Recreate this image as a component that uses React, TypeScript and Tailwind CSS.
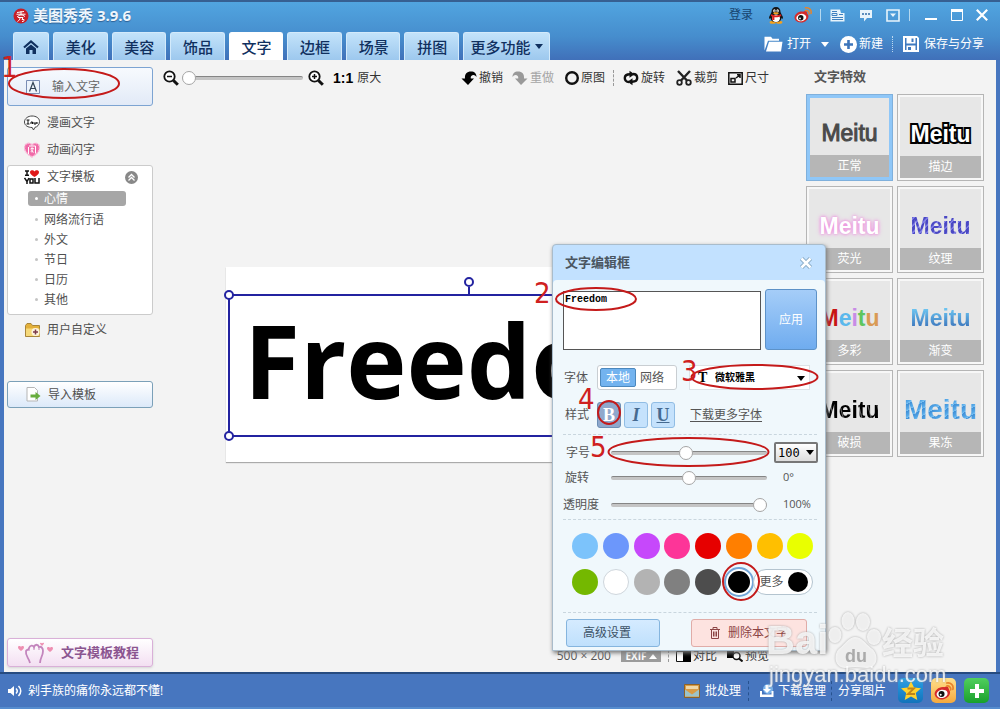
import React, { useState } from 'react';

const tabs = ['美化', '美容', '饰品', '文字', '边框', '场景', '拼图'];
const moods = ['心情', '网络流行语', '外文', '节日', '日历', '其他'];

const effects = [
  { name: '正常', style: 'text-[#4a4a4a] [-webkit-text-stroke:1px_#4a4a4a]' },
  { name: '描边', style: 'text-white font-bold [-webkit-text-stroke:4px_#000] [paint-order:stroke_fill]' },
  { name: '荧光', style: 'text-white font-bold [text-shadow:0_0_3px_#ee82dc,0_0_5px_#ee9be2]' },
  {
    name: '纹理',
    style:
      'font-bold text-transparent bg-clip-text bg-[repeating-linear-gradient(135deg,#4a48c4_0px,#4a48c4_3px,#7d7be6_4px,#7d7be6_5px)]',
  },
  { name: '多彩', style: 'font-bold' },
  { name: '渐变', style: 'font-bold text-transparent bg-clip-text bg-linear-to-b from-[#6cc4f0] from-25% to-[#3a70b8] to-80%' },
  {
    name: '破损',
    style:
      'font-bold text-transparent bg-clip-text bg-[repeating-linear-gradient(75deg,#000_0px,#000_7px,#666_8px,#111_9px)]',
  },
  {
    name: '果冻',
    style:
      'font-bold text-[28px] text-transparent bg-clip-text bg-[repeating-linear-gradient(150deg,#3f8fd6_0px,#55a8e8_4px,#7cc2f2_6px)]',
  },
];

const colors = [
  ['浅蓝', 'bg-[#7cc3fb]'],
  ['蓝色', 'bg-[#6c97fb]'],
  ['紫色', 'bg-[#c648fb]'],
  ['粉色', 'bg-[#fd3598]'],
  ['红色', 'bg-[#e60000]'],
  ['橙色', 'bg-[#ff7f00]'],
  ['金色', 'bg-[#ffbf00]'],
  ['黄色', 'bg-[#e9ff00]'],
  ['绿色', 'bg-[#74b800]'],
  ['白色', 'bg-white border border-[#cfd6dc]'],
  ['浅灰', 'bg-[#b3b3b3]'],
  ['灰色', 'bg-[#808080]'],
  ['深灰', 'bg-[#4d4d4d]'],
  ['黑色', 'bg-black'],
];

function Caret({ className = '' }: { className?: string }) {
  return (
    <svg viewBox="0 0 8 5" className={`h-[5px] w-2 ${className}`} fill="currentColor">
      <path d="M0 0h8L4 5z" />
    </svg>
  );
}

function Weibo({ className = '' }: { className?: string }) {
  return (
    <svg viewBox="0 0 18 18" className={className}>
      <ellipse cx="7.5" cy="11" rx="7" ry="5.5" fill="#d52b2b" transform="rotate(-12 7.5 11)" />
      <path d="M9 6c2-2 5-1 4 2z" fill="#d52b2b" />
      <ellipse cx="7.3" cy="11.6" rx="5" ry="3.7" fill="#fff" transform="rotate(-10 7.3 11.6)" />
      <circle cx="6.8" cy="11.8" r="2.7" fill="#111" />
      <circle cx="6" cy="12.4" r="0.9" fill="#fff" />
      <path d="M11.5 4.5c2-.5 4 1.5 3.5 3.5M11.5 1.8c3.5-.8 6.5 2.2 5.5 5.7" fill="none" stroke="#e8832a" strokeWidth="1.5" strokeLinecap="round" />
    </svg>
  );
}

function Penguin() {
  return (
    <svg viewBox="0 0 16 17" className="h-[17px] w-4">
      <ellipse cx="4.8" cy="15.3" rx="3.2" ry="1.5" fill="#f5a11c" />
      <ellipse cx="11.2" cy="15.3" rx="3.2" ry="1.5" fill="#f5a11c" />
      <path d="M8 0c3 0 4.500 2 4.500 5 0 1 2.500 4 2.500 6 0 1-1 1-1.500 0-.5 3-2.500 4.300-5.500 4.300S3 14 2.500 11C2 12 1 12 1 11c0-2 2.500-5 2.500-6 0-3 1.500-5 4.500-5z" fill="#151515" />
      <ellipse cx="8" cy="11.3" rx="3.9" ry="3.7" fill="#fff" />
      <ellipse cx="6.4" cy="3.8" rx="1.2" ry="1.6" fill="#fff" />
      <ellipse cx="9.6" cy="3.8" rx="1.2" ry="1.6" fill="#fff" />
      <circle cx="6.7" cy="4" r=".6" />
      <circle cx="9.3" cy="4" r=".6" />
      <ellipse cx="8" cy="6.2" rx="2.8" ry="1" fill="#f5a11c" />
      <path d="M3.2 7.3c3 1.5 6.6 1.5 9.6 0l.6 1.7c-2.5 1.2-5 1.5-7 1.2V13H4.2V9.6l-1.4-.7z" fill="#dd1f1f" />
    </svg>
  );
}

function Magnifier({ plus }: { plus?: boolean }) {
  return (
    <svg viewBox="0 0 16 16" className="size-4" fill="none" stroke="#111">
      <circle cx="6.5" cy="6.5" r="5.2" strokeWidth="1.8" fill="#fff" />
      <path d="M10.5 10.5l4.3 4.3" strokeWidth="3" />
      <path d={plus ? 'M4 6.5h5M6.5 4v5' : 'M4 6.5h5'} strokeWidth="1.5" />
    </svg>
  );
}

function UndoArrow({ flip, className = '' }: { flip?: boolean; className?: string }) {
  return (
    <svg viewBox="0 0 16 16" className={`size-4 ${flip ? '-scale-x-100' : ''} ${className}`} fill="currentColor">
      <path d="M.5 8.500H4C3.500 4 6 1.500 10 1.500c3.500 0 5.500 2 5.500 5.500-1-1.500-2.500-2.300-4-1.800-1.500.4-2 1.800-1.700 3.300H13L7 15z" />
    </svg>
  );
}

function ToolButton({ icon, label, className = '' }: { icon: React.ReactNode; label: string; className?: string }) {
  return (
    <button className={`flex items-center gap-[2px] text-xs whitespace-nowrap ${className}`}>
      {icon}
      {label}
    </button>
  );
}

function Slider({ label, value }: { label: string; value: number }) {
  const [v, setV] = useState(value);
  return (
    <input
      type="range"
      aria-label={label}
      value={v}
      onChange={(e) => setV(Number(e.target.value))}
      className="h-4 min-w-0 flex-1 appearance-none bg-transparent [&::-webkit-slider-runnable-track]:h-1 [&::-webkit-slider-runnable-track]:rounded-full [&::-webkit-slider-runnable-track]:border-t [&::-webkit-slider-runnable-track]:border-[#858585] [&::-webkit-slider-runnable-track]:bg-[#c4c4c4] [&::-webkit-slider-thumb]:-mt-[6px] [&::-webkit-slider-thumb]:size-[14px] [&::-webkit-slider-thumb]:appearance-none [&::-webkit-slider-thumb]:rounded-full [&::-webkit-slider-thumb]:border [&::-webkit-slider-thumb]:border-[#a5a5a5] [&::-webkit-slider-thumb]:bg-white"
    />
  );
}

function Header() {
  return (
    <header className="flex h-[60px] shrink-0 justify-between border-t-2 border-t-[#366092] bg-linear-to-b from-[#51a5e0] via-[#468dcd] via-60% to-[#4070b9]">
      <div className="flex flex-col justify-between pl-[13px]">
        <div className="flex h-[27px] items-center gap-1">
          <svg viewBox="0 0 16 16" className="size-4">
            <circle cx="8" cy="8" r="7.5" fill="#c81e28" />
            <path d="M4 4.5l7-1M8 3v5M3.5 6.2h9M7.5 6.5L4 9M8.5 6.5L12 8.5M5 9.5h5l-1 2h2c0 2-.5 2-2 2M7 9.5c0 2-1 3-2.5 4" stroke="#fff" fill="none" />
          </svg>
          <h1 className="text-[15px] font-bold text-[#eef6fc] [text-shadow:0_1px_1px_#2c5f94]">美图秀秀 3.9.6</h1>
        </div>
        <nav className="flex gap-1 text-[15px] leading-7 font-medium text-[#10305f]">
          <button
            aria-label="首页"
            className="flex h-7 w-9 items-center justify-center rounded-t-[3px] border border-b-0 border-[#d3eafb] bg-linear-to-b from-[#c3e3fa] to-[#9dc8ee]"
          >
            <svg viewBox="0 0 16 14" className="h-[14px] w-4">
              <path d="M1 7.5L8 1.5l7 6" fill="none" stroke="currentColor" strokeWidth="2.2" />
              <path d="M3 8.5l5-4 5 4V14H9.500v-4h-3v4H3z" fill="currentColor" />
            </svg>
          </button>
          <div className="flex w-[406px] gap-1">
            {tabs.map((tab) => (
              <button
                key={tab}
                className={`h-7 flex-1 rounded-t-[3px] border border-b-0 pl-px ${
                  tab === '文字' ? 'border-white bg-white' : 'border-[#d3eafb] bg-linear-to-b from-[#c3e3fa] to-[#9dc8ee]'
                }`}
              >
                {tab}
              </button>
            ))}
          </div>
          <button className="flex h-7 w-[87px] items-center justify-center gap-1 rounded-t-[3px] border border-b-0 border-[#d3eafb] bg-linear-to-b from-[#c3e3fa] to-[#9dc8ee]">
            更多功能
            <Caret />
          </button>
        </nav>
      </div>

      <div className="flex flex-col pr-3 text-xs text-white">
        <div className="flex h-[26px] items-center justify-end">
          <a href="#login" className="text-[#17446f]">登录</a>
          <button aria-label="QQ" className="ml-[15px]"><Penguin /></button>
          <button aria-label="微博" className="ml-[10px]"><Weibo className="size-[18px]" /></button>
          <i className="ml-[8px] h-3 w-px bg-[#b5d9f0]" />
          <button aria-label="资讯" className="ml-[9px]">
            <svg viewBox="0 0 15 13" className="h-[13px] w-[15px]">
              <path d="M.5.5h9.500l1 3.500h3.500v8.500H.5z" fill="#e8f4fb" />
              <path d="M2 2.500h5M2 4.500h5v2H2zM9 5.500h4M2 8.500h11M2 10.500h11" fill="none" stroke="#3f80bf" />
            </svg>
          </button>
          <button aria-label="反馈" className="ml-[14px]">
            <svg viewBox="0 0 14 13" className="h-[13px] w-[14px]">
              <path d="M1 1h12v8H8l-3 3.500V9H1z" fill="#e8f4fb" />
              <path d="M3 5h2M6 5h2M9 5h2" stroke="#2f6ca9" strokeWidth="1.5" />
            </svg>
          </button>
          <button aria-label="菜单" className="ml-[13px]">
            <svg viewBox="0 0 14 13" className="h-[13px] w-[14px]">
              <path d="M1 1h12v11H1z" fill="none" stroke="#e8f4fb" strokeWidth="1.6" />
              <path d="M4 4.5h6L7 8z" fill="#e8f4fb" />
            </svg>
          </button>
          <i className="ml-[9px] h-3 w-px bg-[#b5d9f0]" />
          <button aria-label="最小化" className="ml-[15px]">
            <svg viewBox="0 0 12 12" className="size-3"><path d="M0 10h12" stroke="#fff" strokeWidth="2" /></svg>
          </button>
          <button aria-label="最大化" className="ml-[14px]">
            <svg viewBox="0 0 12 12" className="size-3" fill="none" stroke="#fff"><path d="M.5.5h11v11H.5z" /><path d="M0 1.500h12" strokeWidth="3" /></svg>
          </button>
          <button aria-label="关闭" className="ml-[13px]">
            <svg viewBox="0 0 12 12" className="size-3"><path d="M.8.8l10.400 10.400M11.200.8L.8 11.200" stroke="#fff" strokeWidth="2.2" /></svg>
          </button>
        </div>
        <div className="flex h-8 items-center justify-end pr-1">
          <button className="flex items-center gap-1">
            <svg viewBox="0 0 19 16" className="h-4 w-[19px]" fill="#fff">
              <path d="M.5 14.500V.8h6.500l1.500 2H15v2H4z" />
              <path d="M5 5.800h13.500L17 15.500H2z" />
            </svg>
            打开
          </button>
          <button aria-label="最近打开" className="ml-[10px]"><Caret /></button>
          <button className="ml-[11px] flex items-center gap-[2px]">
            <svg viewBox="0 0 17 17" className="size-[17px]">
              <circle cx="8.5" cy="8.5" r="8.5" fill="#fff" />
              <path d="M8.5 4v9M4 8.5h9" stroke="#3c75bb" strokeWidth="2.6" />
            </svg>
            新建
          </button>
          <i className="ml-[9px] h-4 border-l border-dotted border-[#bcd8f0]" />
          <button className="ml-[10px] flex items-center gap-[5px]">
            <svg viewBox="0 0 16 16" className="size-4">
              <path d="M0 0h14l2 2v14H0z" fill="#fff" />
              <path d="M2 2h1.500v5.500h9V2H14v12h-1.500V9.500h-9V14H2z" fill="#3f7abf" />
              <path d="M8.500 2.500h2V6h-2zM5 11h3v3H5z" fill="#3f7abf" />
            </svg>
            保存与分享
          </button>
        </div>
      </div>
    </header>
  );
}

function Sidebar() {
  return (
    <aside className="flex w-[156px] shrink-0 flex-col pt-[7px] pr-[7px] pb-[5px] pl-[3px] text-xs text-[#505050]">
      <button className="flex h-[39px] items-center gap-3 rounded-[3px] border border-[#7da4d2] bg-linear-to-b from-[#f7fafe] to-[#e2eaf7] pl-[18px] text-[#666]">
        <svg viewBox="0 0 14 14" className="size-[14px]">
          <path d="M.5.5h13v13H.5z" fill="#edf3fb" stroke="#7a8db5" />
          <path d="M3.5 11.5L7 2.5l3.5 9M4.8 8.5h4.4" fill="none" stroke="#345" strokeWidth="1.2" />
        </svg>
        输入文字
      </button>
      <button className="mt-[3px] flex h-[27px] items-center gap-[7px] pl-[17px]">
        <svg viewBox="0 0 16 16" className="size-4">
          <path d="M8 1c4 0 7.5 2 7.5 5.5S13 12 11 12.3L9.5 15l-1.3-2.5C4 12.5.5 10.5.5 7S4 1 8 1z" fill="#fff" stroke="#444" />
          <path d="M2.5 5h3M4 5v4M2.5 9h3M7 9V7h1.500v2M10 7v2h2V7M13 7v2" fill="none" stroke="#111" />
        </svg>
        漫画文字
      </button>
      <button className="flex h-[27px] items-center gap-[7px] pl-[17px]">
        <svg viewBox="0 0 16 16" className="size-4">
          <path d="M8 15C3 12 .5 9 .5 5.5.5 1 6 0 8 3c2-3 7.5-2 7.5 2.5C15.5 9 13 12 8 15z" fill="#f06aa8" stroke="#f9b6d5" strokeWidth="1.5" strokeDasharray="2 1" />
          <path d="M4.5 5v7M5 4h6.500v7.500M8 5.500v5M6.500 7l1.500-1 2 1M7 9.500l1-1 1.500 2" fill="none" stroke="#fff" />
        </svg>
        动画闪字
      </button>
      <section className="mt-[2px] rounded-[3px] border border-[#cbcbcb] bg-white py-px">
        <button className="flex h-5 w-full items-center gap-[7px] pl-4">
          <svg viewBox="0 0 16 14" className="h-[14px] w-4" fill="none" stroke="#111" strokeWidth="1.5">
            <path d="M1 1h4M3 1v4M1 5.3h4" />
            <path d="M10.5 7C7.500 5 6 3.800 6 2.200 6 0 9.500-.3 10.500 1.500 11.500-.3 15 0 15 2.200c0 1.600-1.500 2.800-4.500 4.800z" fill="#e01818" stroke="none" />
            <path d="M.5 8L3 11.500 5 8M3 11v3M6 9h3v4H6zM11 8v5h4V8" />
          </svg>
          文字模板
          <svg viewBox="0 0 13 13" className="mr-[14px] ml-auto size-[13px]">
            <circle cx="6.5" cy="6.5" r="6.5" fill="#888" />
            <path d="M3.5 6.5l3-3 3 3M3.5 9.5l3-3 3 3" fill="none" stroke="#fff" strokeWidth="1.3" />
          </svg>
        </button>
        <ul className="mt-[3px] flex flex-col gap-[5px] pt-px pb-[6px] pl-5">
          {moods.map((mood, i) => (
            <li key={mood} className="flex h-[15px] items-center first:mb-px">
              <button
                className={`flex h-[15px] w-[98px] items-center gap-[6px] rounded-[3px] pl-[7px] ${i === 0 ? 'bg-[#a6a6a6] text-white' : ''}`}
              >
                <span className={`size-[3px] rounded-full ${i === 0 ? 'bg-white' : 'bg-[#c4c4c4]'}`} />
                {mood}
              </button>
            </li>
          ))}
        </ul>
      </section>
      <button className="mt-1 flex h-[22px] items-center gap-[6px] pl-[18px]">
        <svg viewBox="0 0 16 14" className="h-[14px] w-4">
          <path d="M.5 2.5L2 .5h4l1.500 2h7v11H.5z" fill="#e3b03a" stroke="#a8853a" />
          <path d="M1 5.500h13.500v7.500H1z" fill="#f6d979" />
          <circle cx="10.5" cy="9" r="4" fill="#fdf3dc" />
          <path d="M10.5 6.5v5M8 9h5" stroke="#7b3a4a" strokeWidth="1.5" />
        </svg>
        用户自定义
      </button>
      <button className="mt-[40px] flex h-[27px] items-center gap-[7px] rounded-[3px] border border-[#7ba0b8] bg-linear-to-b from-white to-[#dce9f9] pl-[18px]">
        <svg viewBox="0 0 15 15" className="size-[15px]">
          <path d="M1 .5h7.500l3 3V14H1z" fill="#fff" stroke="#b5b5b5" />
          <path d="M4.500 7.500h5V5l5 4-5 4v-2.500h-5z" fill="#68ad3e" />
        </svg>
        导入模板
      </button>
      <button className="mt-auto flex h-[29px] items-center gap-[7px] rounded-[3px] border border-[#d9b0d8] bg-linear-to-b from-white to-[#f3dff2] pl-[10px] text-[13px] font-bold text-[#8b5590] shadow-sm">
        <svg viewBox="0 0 36 22" className="h-[22px] w-9">
          <path d="M12 21c-1-5-5-7-4-12 1-2 3-1 3-3 1-3 4-3 5-1 1-3 4-3 5 0 2-1 4 1 4 4 0 5-3 7-3 12" fill="none" stroke="#c385bd" strokeWidth="1.8" />
          <path d="M11 6v3M16 5v3M21 5v3" stroke="#c385bd" />
          <path d="M3 9C1 7.500 0 6.500 0 5.300 0 3.500 2.500 3.500 3 5c.5-1.500 3-1.500 3 .3C6 6.500 5 7.500 3 9zM32 10c-2-1.500-3-2.500-3-3.700C29 4.500 31.500 4.500 32 6c.5-1.500 3-1.500 3 .3 0 1.200-1 2.200-3 3.700zM24 4l-2-2.200C22 .5 23.500.5 24 1.500c.5-1 2-1 2 .3z" fill="#ee8fb1" />
        </svg>
        文字模板教程
      </button>
    </aside>
  );
}

function Workspace() {
  return (
    <main className="flex min-w-0 flex-1 flex-col text-xs text-[#333]">
      <div className="flex h-9 items-center justify-between pr-[33px] pl-[3px]">
        <div className="flex items-center">
          <button aria-label="缩小"><Magnifier /></button>
          <div className="ml-[3px] flex w-[121px]"><Slider label="缩放" value={0} /></div>
          <button aria-label="放大" className="ml-[5px]"><Magnifier plus /></button>
          <button className="ml-[9px] flex items-center gap-1 whitespace-nowrap">
            <b className="font-['Liberation_Sans',sans-serif] text-sm text-black">1:1</b>
            原大
          </button>
        </div>
        <div className="flex items-center">
          <ToolButton label="撤销" icon={<UndoArrow className="text-black" />} />
          <ToolButton label="重做" className="ml-[9px] text-[#a5a5a5]" icon={<UndoArrow flip className="text-[#999]" />} />
          <ToolButton
            label="原图"
            className="ml-[11px]"
            icon={<svg viewBox="0 0 14 14" className="size-[14px]"><circle cx="7" cy="7" r="5.8" fill="none" stroke="#111" strokeWidth="2.4" /></svg>}
          />
          <i className="ml-[8px] h-4 border-l border-dashed border-[#999]" />
          <ToolButton
            label="旋转"
            className="ml-[9px]"
            icon={
              <svg viewBox="0 0 16 16" className="size-4" fill="none" stroke="#111" strokeWidth="2.4">
                <path d="M6 12C3 12 1.800 10 1.800 8S3.500 4.300 7 4.300M10 4c3 0 4.200 2 4.200 4s-1.700 3.700-5.200 3.700" />
                <path d="M6.500.8l5 3.500-5 3.500zM9.500 8.200l-5 3.500 5 3.500z" fill="#111" stroke="none" />
              </svg>
            }
          />
          <ToolButton
            label="裁剪"
            className="ml-[11px]"
            icon={
              <svg viewBox="0 0 16 16" className="size-4" fill="none" stroke="#222" strokeWidth="1.8">
                <path d="M2 1l9 9.5M14 1l-9 9.5" strokeWidth="2.4" />
                <circle cx="3.5" cy="12.5" r="2.3" />
                <circle cx="12.5" cy="12.5" r="2.3" />
              </svg>
            }
          />
          <ToolButton
            label="尺寸"
            className="ml-[10px]"
            icon={
              <svg viewBox="0 0 15 13" className="h-[13px] w-[15px]" fill="none" stroke="#111" strokeWidth="1.5">
                <path d="M.8.8h13.400v11.400H.8z" />
                <path d="M3 6.500h4v3.500H3zM8 6l4-3M9 2.800h3V6" />
              </svg>
            }
          />
        </div>
      </div>

      <div className="flex flex-1 items-center justify-center pr-[22px] pb-2">
        <div className="flex h-[195px] w-[488px] bg-white pt-[27px] pr-1 pb-[25px] pl-[2px] shadow-[0_1px_1px_#aaa]">
          <div className="relative flex min-w-0 flex-1 items-center border-2 border-[#2323a0] pl-[14px]">
            <span className="pb-[10px] font-['Open_Sans',sans-serif] text-[102px] leading-none font-bold text-black">Freedom</span>
            <i className="absolute -top-[6px] -left-[6px] size-[10px] rounded-full border-2 border-[#2323a0] bg-white" />
            <i className="absolute -bottom-[6px] -left-[6px] size-[10px] rounded-full border-2 border-[#2323a0] bg-white" />
            <i className="absolute -top-[19px] left-1/2 size-[10px] -translate-x-1/2 rounded-full border-2 border-[#2323a0] bg-white" />
            <i className="absolute -top-[9px] left-1/2 h-2 w-[2px] -translate-x-1/2 bg-[#2323a0]" />
          </div>
        </div>
      </div>

      <div className="flex h-8 items-center justify-end pr-[33px]">
        <span className="text-[#555]">500 × 200</span>
        <button className="ml-[10px] flex h-[11px] w-10 items-center justify-center gap-[2px] bg-[#9b9b9b] text-[10px] leading-none font-bold text-white">
          EXIF
          <Caret className="rotate-180" />
        </button>
        <i className="ml-[7px] h-3 border-l border-dashed border-[#999]" />
        <ToolButton
          label="对比"
          className="ml-[7px]"
          icon={<svg viewBox="0 0 15 11" className="h-[11px] w-[15px]"><path d="M.5.5h14v10H.5z" fill="#fff" stroke="#111" /><path d="M7 0h8v11H7z" /></svg>}
        />
        <ToolButton
          label="预览"
          className="ml-[10px]"
          icon={
            <svg viewBox="0 0 16 12" className="h-3 w-4">
              <path d="M0 0h7v8H0z" />
              <circle cx="9.5" cy="6" r="3.5" fill="#fff" stroke="#111" strokeWidth="1.4" />
              <path d="M12 8.5l3.5 3" stroke="#111" strokeWidth="2" />
            </svg>
          }
        />
      </div>
    </main>
  );
}

function EffectsPanel() {
  return (
    <aside className="w-[194px] shrink-0 pl-1 text-xs">
      <h2 className="flex h-[34px] items-center pl-2 text-[13px] font-bold text-[#555]">文字特效</h2>
      <div className="grid w-[178px] grid-cols-2 gap-x-1 gap-y-[5px]">
        {effects.map((fx, i) => (
          <button
            key={fx.name}
            className={`flex h-[87px] flex-col bg-[#e7e7e7] outline-1 -outline-offset-1 ${
              i === 0 ? 'border-4 border-[#8fc7f8] outline-[#7fb0dc]' : 'border-[3px] border-[#f7f7f7] outline-[#b5b5b5]'
            }`}
          >
            <span className="flex min-h-0 w-full flex-1 items-end justify-center">
              <span className={`font-['Liberation_Sans',sans-serif] text-[23px] leading-9 whitespace-nowrap ${fx.style}`}>
                {fx.name === '多彩' ? (
                  <>
                    <span className="text-[#c81414]">M</span>
                    <span className="text-[#5bb8ec]">e</span>
                    <span className="text-[#c88ce6]">i</span>
                    <span className="text-[#5fc65f]">t</span>
                    <span className="text-[#d99a55]">u</span>
                  </>
                ) : (
                  'Meitu'
                )}
              </span>
            </span>
            <span className="mt-1 h-[22px] w-full bg-[#b6b6b6] leading-[22px] text-white">{fx.name}</span>
          </button>
        ))}
      </div>
    </aside>
  );
}

function TextDialog() {
  const [color, setColor] = useState('黑色');
  return (
    <div
      role="dialog"
      aria-label="文字编辑框"
      className="absolute top-[244px] left-[552px] z-10 w-[274px] rounded-t-[4px] border border-[#a9bccb] bg-[#c2e1ff] text-xs text-[#555] shadow-[1px_2px_4px_#777]"
    >
      <div className="flex h-[35px] items-center justify-between pr-[12px] pl-3">
        <h2 className="text-[13px] font-bold text-[#4a5560]">文字编辑框</h2>
        <button aria-label="关闭编辑框">
          <svg viewBox="0 0 14 14" className="size-[14px]">
            <path d="M2.5 2.5l9 9M11.5 2.5l-9 9" stroke="#86a9c4" strokeWidth="4.5" />
            <path d="M2.5 2.5l9 9M11.5 2.5l-9 9" stroke="#fff" strokeWidth="2.5" />
          </svg>
        </button>
      </div>

      <div className="rounded-t-[4px] bg-[#f0f8fc] pt-[9px] pr-2 pb-[3px] pl-[10px]">
        <div className="flex gap-1">
          <textarea
            aria-label="文字内容"
            defaultValue="Freedom"
            className="mt-[2px] h-[59px] min-w-0 flex-1 resize-none border border-[#555] bg-white px-px pt-[2px] font-['Liberation_Mono',monospace] text-[10px] leading-3 font-bold text-black"
          />
          <button className="h-[61px] w-[52px] rounded-[3px] border border-[#5d92c8] bg-linear-to-b from-[#a5cdf8] to-[#6facef] text-white">应用</button>
        </div>

        <div className="mt-[15px] flex items-center">
          <span className="w-[34px] pl-px">字体</span>
          <div className="flex h-[25px] w-20 items-center gap-1 rounded-[3px] border border-[#c9ced2] bg-white p-[2px]">
            <button className="h-[19px] w-9 rounded-[2px] border border-[#4c88bd] bg-[#73b3ef] leading-none text-white">本地</button>
            <button className="leading-none">网络</button>
          </div>
          <div className="relative ml-3 h-[25px] w-[121px] border border-[#dde3e7] bg-white">
            <b className="absolute top-[3px] left-2 font-['Liberation_Serif',serif] text-sm leading-[18px] text-black">T</b>
            <select aria-label="字体名称" className="h-full w-full appearance-none bg-transparent pl-[25px] text-[10px] font-bold text-black">
              <option>微软雅黑</option>
            </select>
            <Caret className="pointer-events-none absolute top-[10px] right-1 text-black" />
          </div>
        </div>

        <div className="mt-3 flex items-center gap-[3px]">
          <span className="w-[31px] pl-[2px]">样式</span>
          <div className="flex gap-[3px] font-['Liberation_Serif',serif] text-lg leading-none font-bold text-[#456a90]">
            <button className="h-[26px] w-6 rounded-[3px] border border-[#6c8fb5] bg-[#8fa8cc] text-white">B</button>
            <button className="h-[26px] w-6 rounded-[3px] border border-[#91bde4] bg-[#c5e2fc] italic">I</button>
            <button className="h-[26px] w-6 rounded-[3px] border border-[#91bde4] bg-[#c5e2fc] underline">U</button>
          </div>
          <a href="#fonts" className="ml-3 underline underline-offset-2">下载更多字体</a>
        </div>

        <div className="mt-[6px] border-t border-dashed border-[#c9d6de]" />

        <div className="mt-[7px] flex h-[21px] items-center">
          <span className="w-12 pl-[3px]">字号</span>
          <div className="flex w-[156px]"><Slider label="字号" value={48} /></div>
          <div className="relative -mr-px ml-auto">
            <select
              aria-label="字号数值"
              className="h-[21px] w-11 appearance-none rounded-[2px] border-2 border-[#777] bg-linear-to-b from-white to-[#ddd] pl-[2px] font-['DejaVu_Sans_Mono',monospace] text-xs leading-none text-black"
            >
              <option>100</option>
            </select>
            <Caret className="pointer-events-none absolute top-2 right-1 text-black" />
          </div>
        </div>
        <div className="mt-[4px] flex h-[21px] items-center">
          <span className="w-12 pl-[2px]">旋转</span>
          <div className="flex w-[156px]"><Slider label="旋转" value={50} /></div>
          <span className="ml-4 text-[11px]">0°</span>
        </div>
        <div className="mt-[6px] flex h-[21px] items-center">
          <span className="w-12">透明度</span>
          <div className="flex w-[156px]"><Slider label="透明度" value={100} /></div>
          <span className="ml-4 text-[11px]">100%</span>
        </div>

        <div className="mt-1 border-t border-dashed border-[#c9d6de]" />

        <div className="mt-[13px] mr-1 ml-[9px] grid grid-cols-8 gap-x-[5px] gap-y-[10px]">
          {colors.map(([name, bg]) => (
            <input
              key={name}
              type="radio"
              name="color"
              aria-label={name}
              checked={color === name}
              onChange={() => setColor(name)}
              className={`size-[26px] appearance-none rounded-full ${bg} checked:border-2 checked:border-white checked:outline-2 checked:outline-[#72a5d8]`}
            />
          ))}
          <button className="col-span-2 -ml-1 flex h-[26px] items-center justify-between rounded-full border border-[#b4c4cf] bg-white pr-1 pl-[6px]">
            更多
            <span className="size-5 rounded-full bg-black" />
          </button>
        </div>

        <div className="mt-[17px] border-t border-dashed border-[#c9d6de]" />

        <div className="mt-[6px] flex justify-between pr-[10px] pl-[3px]">
          <button className="h-7 w-[94px] rounded-[3px] border border-[#85b5de] bg-linear-to-b from-[#d5ebff] to-[#bfe0fc] pr-3 text-[#3d5266]">高级设置</button>
          <button className="flex h-7 w-[116px] items-center justify-center gap-2 rounded-[3px] border border-[#e0aca8] bg-[#fde3e0] text-[#8c4444]">
            <svg viewBox="0 0 10 12" className="h-3 w-[10px]" fill="none" stroke="currentColor">
              <path d="M0 2.5h10M3 2V.5h4V2M1.5 2.5v9h7v-9M3.5 4.5v5M5 4.5v5M6.500 4.500v5" />
            </svg>
            删除本文字
          </button>
        </div>
      </div>
    </div>
  );
}

function Footer() {
  return (
    <footer className="flex h-[37px] shrink-0 items-center justify-between border-t-2 border-b-2 border-t-[#264b80] border-b-[#568dcf] bg-[#4776bf] pr-[11px] pl-2 text-xs text-white">
      <p className="flex items-center gap-[6px]">
        <svg viewBox="0 0 14 12" className="h-3 w-[14px]" fill="none" stroke="#fff" strokeWidth="1.5">
          <path d="M0 4h2.500L6 1v10L2.500 8H0z" fill="#fff" stroke="none" />
          <path d="M8 3.500c1.500 1.500 1.500 3.500 0 5M10.500 1c3 3 3 7 0 10" />
        </svg>
        剁手族的痛你永远都不懂!
      </p>
      <div className="flex items-center">
        <button className="flex items-center gap-[5px]">
          <svg viewBox="0 0 16 14" className="h-[14px] w-4">
            <path d="M.5.5h15v13H.5z" fill="#d99b45" stroke="#8f6326" />
            <path d="M2 2h12v3H2z" fill="#eed7a8" />
            <path d="M1 5.500l7 5 7-5v7H1z" fill="#9cc3c9" />
          </svg>
          批处理
        </button>
        <i className="ml-[7px] h-5 border-l border-dashed border-[#27528f]" />
        <button className="ml-[11px] flex items-center gap-[4px]">
          <svg viewBox="0 0 14 13" className="h-[13px] w-[14px]" fill="#fff">
            <circle cx="8" cy="5" r="5" fill="#79b2ea" />
            <path d="M5.500 1h3v4H11L7 9 3 5h2.500z" />
            <path d="M0 7h2v3.500h9.500V7h2v6H0z" />
          </svg>
          下载管理
        </button>
        <i className="ml-[5px] h-5 border-l border-dashed border-[#27528f]" />
        <span className="ml-[6px]">分享图片</span>
        <button aria-label="QQ空间" className="ml-[12px] flex size-[25px] items-center justify-center rounded-[5px] bg-linear-to-b from-[#2aa0e6] to-[#1273bb]">
          <svg viewBox="0 0 22 22" className="size-[22px]">
            <path d="M11 1l3 6.500 7 .8-5.200 4.800L17.300 20 11 16.500 4.700 20l1.500-6.900L1 8.300l7-.8z" fill="#ffd22e" />
            <path d="M7.500 8.500h6.500l-6 5.500h7" fill="none" stroke="#c0841a" strokeWidth="1.8" />
          </svg>
        </button>
        <button aria-label="新浪微博" className="ml-2 flex size-[25px] items-center justify-center rounded-[5px] bg-linear-to-b from-[#ffe08a] to-[#f5a93c]">
          <Weibo className="size-5" />
        </button>
        <button aria-label="更多分享" className="ml-2 flex size-[25px] items-center justify-center rounded-[5px] bg-linear-to-b from-[#4fcf5d] to-[#16a02c]">
          <svg viewBox="0 0 14 14" className="size-[14px]"><path d="M7 0v14M0 7h14" stroke="#fff" strokeWidth="4" /></svg>
        </button>
      </div>
    </footer>
  );
}

function Annotations() {
  return (
    <svg viewBox="0 0 1000 709" className="pointer-events-none absolute top-0 left-0 z-20 h-[709px] w-[1000px]">
      <g fill="none" stroke="#c41a1a" strokeWidth="2">
        <ellipse cx="64" cy="83.5" rx="55" ry="14.5" />
        <ellipse cx="596" cy="299" rx="40" ry="11" />
        <ellipse cx="754.5" cy="377" rx="63" ry="12" />
        <ellipse cx="609" cy="412.5" rx="11" ry="11.5" />
        <ellipse cx="688.5" cy="452" rx="80" ry="14" />
        <ellipse cx="741" cy="581.5" rx="18" ry="18.5" />
      </g>
      <g fill="#cf2020" className="font-['DejaVu_Sans_Condensed','DejaVu_Sans',sans-serif] text-[29px]">
        <text x="1" y="77">1</text>
        <text x="534" y="303">2</text>
        <text x="681" y="381">3</text>
        <text x="578" y="409">4</text>
        <text x="590" y="457">5</text>
      </g>
    </svg>
  );
}

function Watermark() {
  return (
    <svg viewBox="0 0 180 88" className="pointer-events-none absolute top-[600px] left-[766px] z-30 h-[88px] w-[180px] drop-shadow-[0_0_1px_#999]">
      <g fill="#fff" fillOpacity="0.8">
        <text x="0" y="54" className="font-['Liberation_Sans',sans-serif] text-[40px] font-bold">Bai</text>
        <ellipse cx="69" cy="35" rx="6.5" ry="8" />
        <ellipse cx="82" cy="21" rx="6.5" ry="9" />
        <ellipse cx="97" cy="22" rx="7" ry="9" />
        <ellipse cx="108" cy="37" rx="7" ry="8" />
        <path d="M89 37c-6 0-10 7-15 11-7 5-6 20 5 20 4 0 6-1 10-1s8 1 12 1c12 0 12-15 4-20-6-5-9-11-16-11z" />
        <text x="116" y="54" className="font-['Noto_Sans_CJK_SC',sans-serif] text-[31px] font-bold">经验</text>
        <text x="3" y="82" className="font-['Liberation_Sans',sans-serif] text-[22px]">jingyan.baidu.com</text>
      </g>
      <text x="79" y="62" fill="#aaa" className="font-['Liberation_Sans',sans-serif] text-[18px] font-bold">du</text>
    </svg>
  );
}

export default function App() {
  return (
    <div className="relative flex min-h-screen flex-col overflow-hidden bg-[#4776bf] font-['Open_Sans','Noto_Sans_CJK_SC',sans-serif]">
      <Header />
      <div className="mr-1 ml-1 flex flex-1 bg-[#f3f3f3]">
        <Sidebar />
        <Workspace />
        <EffectsPanel />
      </div>
      <Footer />
      <TextDialog />
      <Annotations />
      <Watermark />
    </div>
  );
}
